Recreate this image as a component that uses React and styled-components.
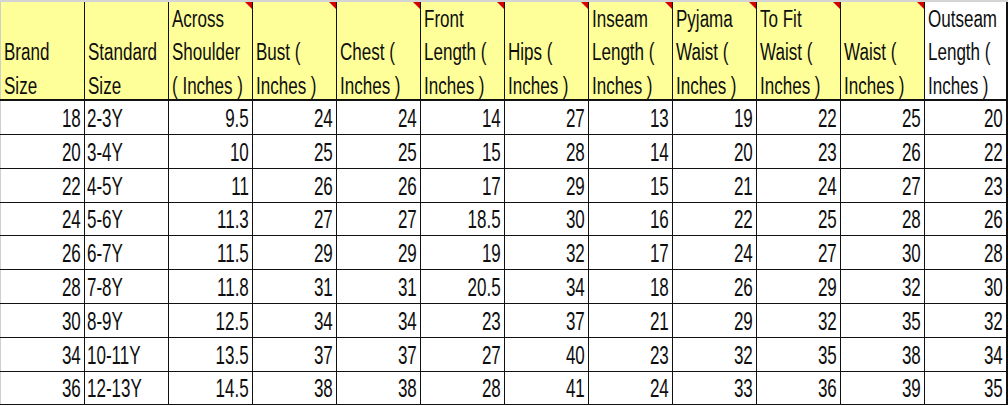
import React from 'react';
import styled, { createGlobalStyle } from 'styled-components';

const headers = [
  { lines: ['Brand', 'Size'] },
  { lines: ['Standard', 'Size'] },
  { lines: ['Across', 'Shoulder', '( Inches )'], note: true },
  { lines: ['Bust (', 'Inches )'], note: true },
  { lines: ['Chest (', 'Inches )'], note: true },
  { lines: ['Front', 'Length (', 'Inches )'], note: true },
  { lines: ['Hips (', 'Inches )'], note: true },
  { lines: ['Inseam', 'Length (', 'Inches )'], note: true },
  { lines: ['Pyjama', 'Waist (', 'Inches )'], note: true },
  { lines: ['To Fit', 'Waist (', 'Inches )'], note: true },
  { lines: ['Waist (', 'Inches )'], note: true },
  { lines: ['Outseam', 'Length (', 'Inches )'], plain: true },
];

const rows = [
  ['18', '2-3Y', '9.5', '24', '24', '14', '27', '13', '19', '22', '25', '20'],
  ['20', '3-4Y', '10', '25', '25', '15', '28', '14', '20', '23', '26', '22'],
  ['22', '4-5Y', '11', '26', '26', '17', '29', '15', '21', '24', '27', '23'],
  ['24', '5-6Y', '11.3', '27', '27', '18.5', '30', '16', '22', '25', '28', '26'],
  ['26', '6-7Y', '11.5', '29', '29', '19', '32', '17', '24', '27', '30', '28'],
  ['28', '7-8Y', '11.8', '31', '31', '20.5', '34', '18', '26', '29', '32', '30'],
  ['30', '8-9Y', '12.5', '34', '34', '23', '37', '21', '29', '32', '35', '32'],
  ['34', '10-11Y', '13.5', '37', '37', '27', '40', '23', '32', '35', '38', '34'],
  ['36', '12-13Y', '14.5', '38', '38', '28', '41', '24', '33', '36', '39', '35'],
];

// rows are ~33.7px in the sheet, so mix 34 and 33
const rowHeights = [34, 34, 34, 33, 34, 34, 34, 34, 33];

const App = () => {
  return (
    <>
      <GlobalStyle />
      <Sheet>
        <HeaderRow>
          {headers.map((h, i) => (
            <HeadCell key={i} $plain={h.plain}>
              {h.note && <Note />}
              {h.lines.map((line) => (
                <Line key={line}>{line}</Line>
              ))}
            </HeadCell>
          ))}
        </HeaderRow>
        {rows.map((row, r) => (
          <Row key={r} $height={rowHeights[r]}>
            {row.map((val, c) => (
              <Cell key={c} $left={c === 1}>
                <Value $left={c === 1}>{val}</Value>
              </Cell>
            ))}
          </Row>
        ))}
      </Sheet>
    </>
  );
};

export default App;

const GlobalStyle = createGlobalStyle`
  body {
    margin: 0;
    background: #fff;
  }
`;

const Sheet = styled.div`
  width: 1008px;
  height: 406px;
  overflow: hidden;
  font-family: 'Liberation Sans', Arial, sans-serif;
  color: #0e0e0e;
  border-top: 2px solid #d4d4d4;
  box-sizing: border-box;
`;

const HeaderRow = styled.div`
  display: grid;
  grid-template-columns: repeat(12, 84px);
  grid-template-rows: 97px;
  border-bottom: 2px solid #111;
`;

const HeadCell = styled.div`
  position: relative;
  display: flex;
  flex-direction: column;
  justify-content: flex-end;
  padding: 0 0 0 3px;
  background: ${(p) => (p.$plain ? '#ffffff' : '#ffff99')};
  border-left: 1px solid #111;
  font-size: 23px;
  line-height: 33.5px;
  white-space: nowrap;

  &:first-child {
    border-left: 1px solid #cfcfcf;
  }
  &:last-child {
    border-right: 2px solid #111;
  }
`;

const Line = styled.span`
  display: block;
  transform-origin: left center;
  transform: translateY(4px) scaleX(0.74);
`;

const Note = styled.span`
  position: absolute;
  top: 0;
  right: 0;
  width: 0;
  height: 0;
  border-top: 7px solid #d40000;
  border-left: 7px solid transparent;
`;

const Row = styled.div`
  display: grid;
  grid-template-columns: repeat(12, 84px);
  height: ${(p) => p.$height}px;
  box-sizing: border-box;
  border-bottom: 1px solid #111;
`;

const Cell = styled.div`
  display: flex;
  align-items: flex-end;
  justify-content: ${(p) => (p.$left ? 'flex-start' : 'flex-end')};
  padding: 0 3px 3px 2px;
  border-left: 1px solid #111;
  font-size: 25px;
  line-height: 25px;
  white-space: nowrap;

  &:first-child {
    border-left: 1px solid #cfcfcf;
  }
  &:last-child {
    border-right: 2px solid #111;
  }
`;

const Value = styled.span`
  display: inline-block;
  transform-origin: ${(p) => (p.$left ? 'left' : 'right')} center;
  transform: scaleX(0.68);
`;
